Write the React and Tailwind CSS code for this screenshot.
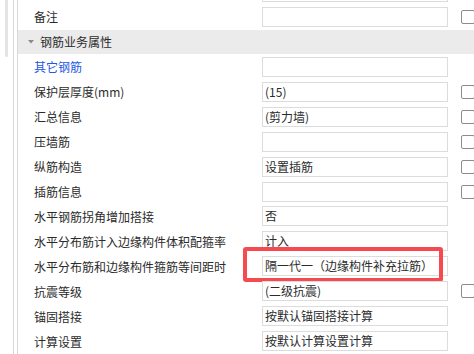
import React from "react";

const rows = [
  { label: "", value: "", check: false },
  { label: "备注", value: "", check: true },
  { header: "钢筋业务属性" },
  { label: "其它钢筋", value: "", check: false, blue: true },
  { label: "保护层厚度(mm)", value: "(15)", check: true },
  { label: "汇总信息", value: "(剪力墙)", check: true },
  { label: "压墙筋", value: "", check: true },
  { label: "纵筋构造", value: "设置插筋", check: true },
  { label: "插筋信息", value: "", check: true },
  { label: "水平钢筋拐角增加搭接", value: "否", check: false },
  { label: "水平分布筋计入边缘构件体积配箍率", value: "计入", check: false },
  { label: "水平分布筋和边缘构件箍筋等间距时", value: "隔一代一（边缘构件补充拉筋）", check: false, mark: true },
  { label: "抗震等级", value: "(二级抗震)", check: true },
  { label: "锚固搭接", value: "按默认锚固搭接计算", check: false },
  { label: "计算设置", value: "按默认计算设置计算", check: false },
];

function Row({ row }) {
  if (row.header) {
    return (
      <div className="flex items-center h-[24px] mb-[1px] bg-[#ebebeb]">
        <svg width="6" height="4" viewBox="0 0 6 4" className="ml-[10px]">
          <path d="M0 0 L6 0 L3 3.5 Z" fill="#8a8a8a" />
        </svg>
        <span className="ml-[6px] text-[12px] text-[#2b2b2b]">{row.header}</span>
      </div>
    );
  }
  return (
    <div className="flex h-[25px]">
      <div className={`w-[244px] shrink-0 pl-[16px] flex items-center text-[12px] whitespace-nowrap ${row.blue ? "text-[#2458e0]" : "text-[#2b2b2b]"}`}>
        {row.label}
      </div>
      <div className="relative mt-[2px] w-[186px] h-[20px] shrink-0 border border-[#dcdcdc] bg-white flex items-center pl-[2px] text-[12px] text-[#2b2b2b] whitespace-nowrap">
        {row.value}
        {row.mark && (
          <div className="absolute left-[-20px] top-[-10px] w-[200px] h-[35px] border-[4px] border-[#f44a50] rounded-[3px]" />
        )}
      </div>
      {row.check && (
        <div className="ml-[13px] mt-[5px] w-[14px] h-[14px] shrink-0 border border-[#8c8c8c] rounded-[2px] bg-white" />
      )}
    </div>
  );
}

export default function App() {
  return (
    <div
      className="w-[474px] h-[354px] overflow-hidden bg-white flex"
      style={{ fontFamily: '"Noto Sans CJK SC", "Noto Sans", sans-serif' }}
    >
      <div className="w-[14px] shrink-0 border-r border-[#d9d9d9] pl-[5px]">
        <div className="w-[3px] h-[57px] bg-[#e4e4e4] rounded-b-full" />
      </div>
      <div className="w-[4px] shrink-0 border-r border-[#d9d9d9]" />
      <div className="flex-1 min-w-0 -mt-[20px] flex flex-col">
        {rows.map((row, i) => (
          <Row key={i} row={row} />
        ))}
      </div>
    </div>
  );
}
